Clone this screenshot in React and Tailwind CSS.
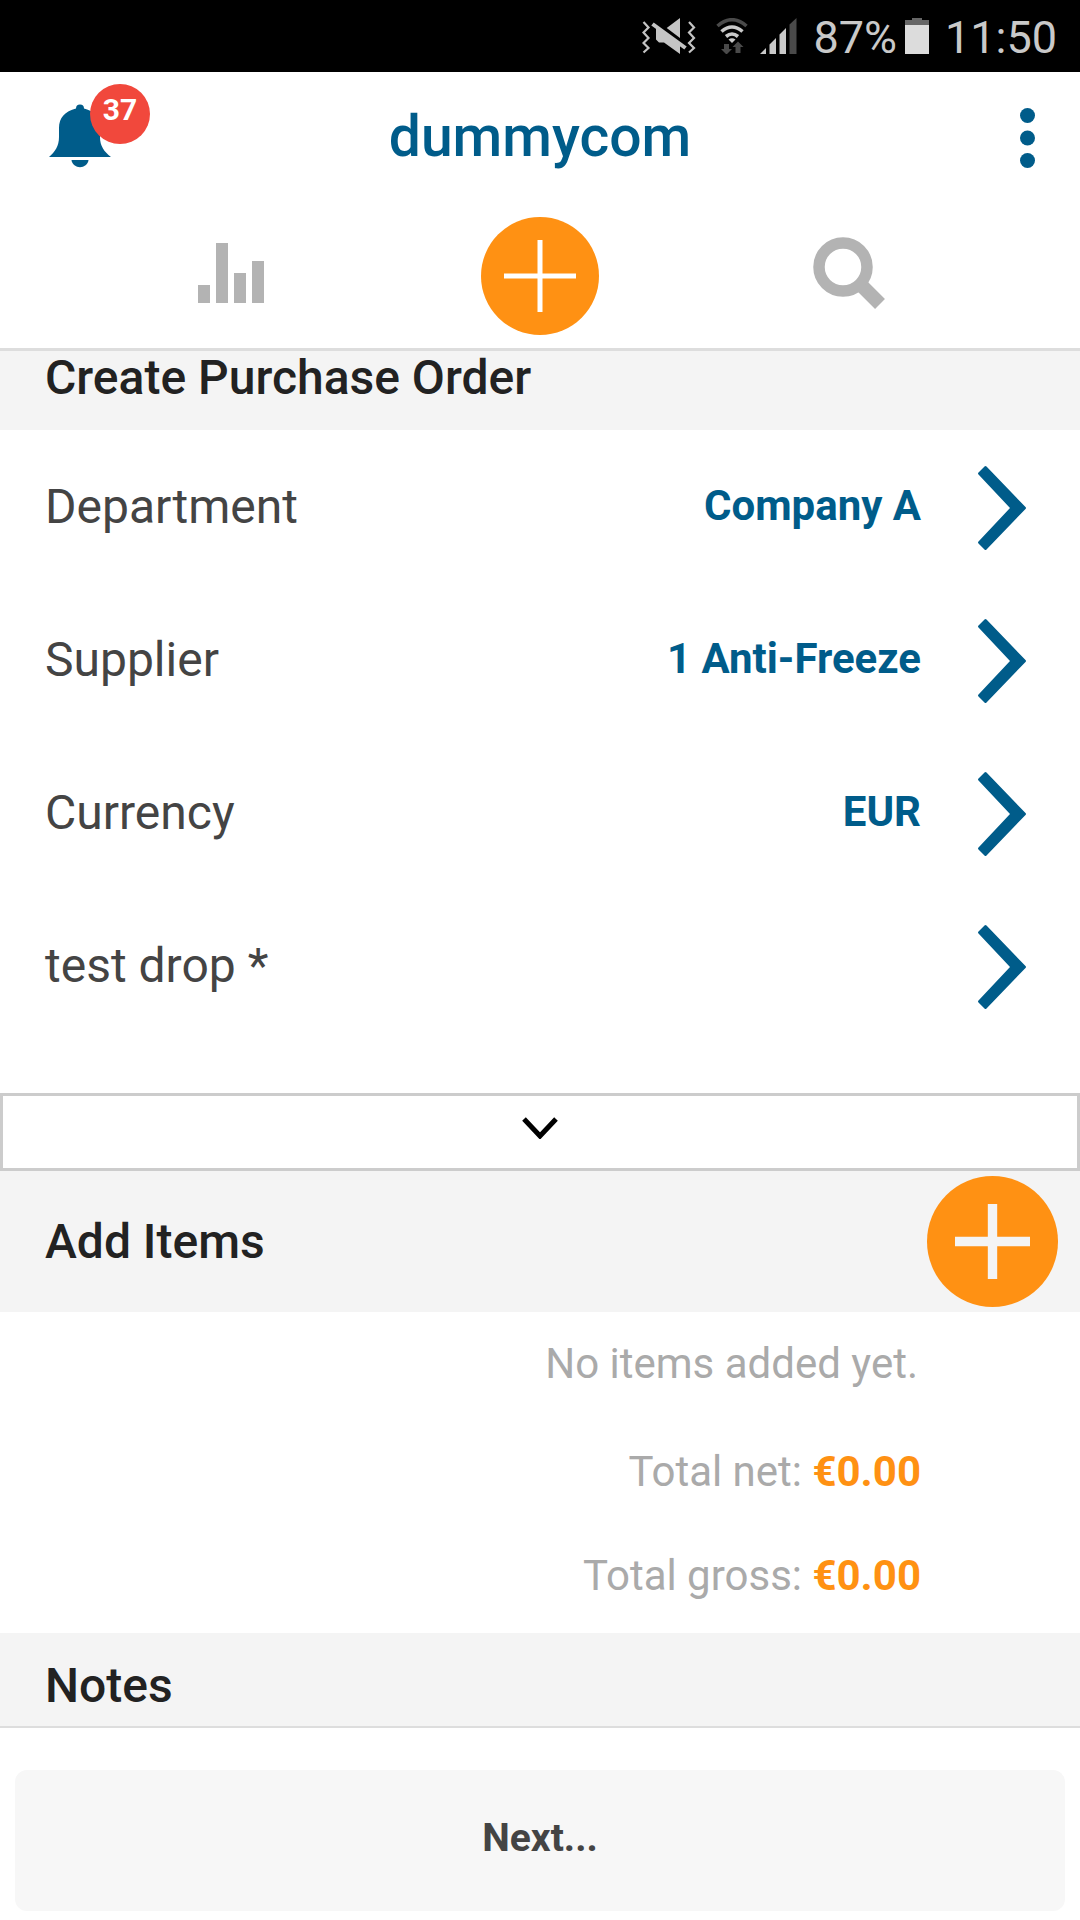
const fields = [
  { label: "Department", value: "Company A" },
  { label: "Supplier", value: "1 Anti-Freeze" },
  { label: "Currency", value: "EUR" },
  { label: "test drop *", value: "" },
];

function MuteIcon() {
  return (
    <svg width="54" height="36" viewBox="0 0 54 36" fill="none" aria-hidden="true">
      <path d="M1.500 4l5 5.500-5 5 5 5.500-5 5 5 5-5 4.500" stroke="#c4c4c4" strokeWidth="2.200" />
      <path d="M47 4l5 5.500-5 5 5 5.500-5 5 5 5-5 4.500" stroke="#c4c4c4" strokeWidth="2.200" />
      <path d="M24.700 10L38 0v20zM14 9l24 17v10L22 24.500h-5l-3-3z" fill="#c4c4c4" />
      <path d="M10.500 6L43.500 30" stroke="#c4c4c4" strokeWidth="4" />
    </svg>
  );
}

function WifiIcon() {
  return (
    <svg width="32" height="36" viewBox="0 0 32 36" fill="none" aria-hidden="true">
      <path d="M1.500 8q14.500-12.500 29 0" stroke="#4a4a4a" strokeWidth="3.600" />
      <path d="M5.500 13.500q10.500-9 21 0M10 18.500q6-5 12 0" stroke="#c9c9c9" strokeWidth="3.600" />
      <path d="M12.500 21.500q3.500-2.500 7 0L16 25z" fill="#c9c9c9" />
      <path d="M8 26h5v5h3l-5.500 5.500L5 31h3zM19.500 35v-6h-3l5.500-5.500 5.500 5.500h-3v6z" fill="#4a4a4a" />
    </svg>
  );
}

function SignalIcon() {
  return (
    <svg width="37" height="36" viewBox="0 0 37 36" aria-hidden="true">
      <path d="M0 36l6-6v6zM9.500 26.500l6.500-6.500v16H9.500zM19.500 16.500L26 10v26h-6.500z" fill="#c9c9c9" />
      <path d="M29.500 6.500L36.500 0v36h-7z" fill="#4a4a4a" />
    </svg>
  );
}

function BatteryIcon() {
  return (
    <svg width="24" height="36" viewBox="0 0 24 36" aria-hidden="true">
      <path d="M0 2h7V0h10v2h7v6H0z" fill="#666" />
      <path d="M0 7h24v29H0z" fill="#dcdcdc" />
    </svg>
  );
}

function BellIcon() {
  return (
    <svg width="62" height="64" viewBox="0 0 62 64" fill="#005c8a" aria-hidden="true">
      <path d="M27 4.500a4 4 0 0 1 8 0C46 7 51 14 51 24v9c0 9 4 14.500 11 20H0c6-5 10-11 10-20v-9C10 14 16 7 27 4.500z" />
      <path d="M22.500 56h17c-1 9.500-16 9.500-17 0z" />
    </svg>
  );
}

function PlusIcon({ className, bar }) {
  return (
    <svg className={className} viewBox="0 0 72 72" fill="none" aria-hidden="true">
      <path d="M36 0v72M0 36h72" stroke="currentColor" strokeWidth={bar} />
    </svg>
  );
}

function ChevronRight() {
  return (
    <svg width="48" height="86" viewBox="0 -2 48 86" fill="#005c8a" aria-hidden="true">
      <path d="M6.500.5q1-1 2 0L47.500 41q1 1 0 2L8.500 83.500q-1 1-2 0l-6-6q-1-1 0-2L32 42 .5 8.500q-1-1 0-2z" />
    </svg>
  );
}

export default function App() {
  return (
    <div className="flex min-h-screen flex-col bg-white font-['Roboto',sans-serif] text-[#222]">
      <div className="flex h-18 items-center justify-end bg-black pr-[23px] text-[45px] leading-none text-[#c9c9c9]">
        <MuteIcon />
        <span className="ml-5 flex"><WifiIcon /></span>
        <span className="ml-3 flex"><SignalIcon /></span>
        <span className="ml-4 pt-0.5">87%</span>
        <span className="ml-2 flex"><BatteryIcon /></span>
        <span className="ml-4 pt-0.5">11:50</span>
      </div>

      <header className="border-b-3 border-[#ddd]">
        <div className="grid h-33 grid-cols-[1fr_auto_1fr] items-center px-[45px] pb-1">
          <button type="button" aria-label="Notifications" className="relative justify-self-start pl-1">
            <BellIcon />
            <span className="absolute -top-5 left-[45px] size-15 rounded-full bg-[#f1483c] text-center text-[30px] leading-[52px] font-bold text-white">
              37
            </span>
          </button>
          <h1 className="text-[57px] leading-none font-medium text-[#005c8a]">dummycom</h1>
          <button type="button" aria-label="More options" className="justify-self-end pt-1">
            <svg width="15" height="60" viewBox="0 0 15 60" fill="#005c8a" aria-hidden="true">
              <circle cx="7.500" cy="7.500" r="7.500" />
              <circle cx="7.500" cy="30" r="7.500" />
              <circle cx="7.500" cy="52.500" r="7.500" />
            </svg>
          </button>
        </div>
        <nav className="grid h-36 grid-cols-3 items-center justify-items-center px-[77px]">
          <button type="button" aria-label="Statistics">
            <svg width="66" height="66" viewBox="0 3 66 66" fill="#b3b3b3" aria-hidden="true">
              <path d="M0 45h12v18H0zM18 3h12v60H18zM36 33h12v30H36zM54 21h12v42H54z" />
            </svg>
          </button>
          <button type="button" aria-label="Create" className="flex size-[118px] items-center justify-center rounded-full bg-[#ff9113] text-white">
            <PlusIcon className="size-18" bar="5" />
          </button>
          <button type="button" aria-label="Search">
            <svg width="72" height="78" viewBox="0 3 72 78" fill="none" stroke="#b3b3b3" aria-hidden="true">
              <circle cx="30" cy="33" r="24" strokeWidth="11.500" />
              <path d="M50 53l17 17" strokeWidth="14" />
            </svg>
          </button>
        </nav>
      </header>

      <main className="flex-1">
        <h2 className="bg-[#f4f4f4] px-[45px] pb-[26px] text-[48px] leading-[53px] font-medium">Create Purchase Order</h2>
        <div className="pb-[51px]">
          {fields.map((field) => (
            <button key={field.label} type="button" className="flex h-[153px] w-full items-center pr-[54px] pl-[45px]">
              <span className="text-[48px] leading-none text-[#444]">{field.label}</span>
              <span className="mr-[57px] ml-auto pb-0.5 text-[42px] leading-none font-bold text-[#005c8a]">{field.value}</span>
              <ChevronRight />
            </button>
          ))}
        </div>
        <button type="button" aria-label="Show more fields" className="flex h-[78px] w-full justify-center border-3 border-[#ccc] pt-[21px]">
          <svg width="36" height="22" viewBox="0 0 36 22" fill="none" aria-hidden="true">
            <path d="M2 2l16 17L34 2" stroke="#000" strokeWidth="5" />
          </svg>
        </button>
        <div className="flex h-[141px] items-center justify-between bg-[#f4f4f4] pr-[22px] pl-[45px]">
          <h2 className="text-[48px] leading-none font-medium">Add Items</h2>
          <button type="button" aria-label="Add item" className="flex size-[131px] items-center justify-center rounded-full bg-[#ff9113] text-[#f4f4f4]">
            <PlusIcon className="size-[75px]" bar="9" />
          </button>
        </div>
        <div className="pt-[10px] pr-[159px] pb-[5px] text-right text-[42px] text-[#aaa]">
          <p className="pr-[3px] leading-[84px]">No items added yet.</p>
          <p className="pt-[14px] leading-[104px]">Total net: <b className="text-[#ff9113]">€0.00</b></p>
          <p className="leading-[104px]">Total gross: <b className="text-[#ff9113]">€0.00</b></p>
        </div>
        <h2 className="bg-[#f4f4f4] px-[45px] pt-[25px] pb-3 text-[48px] leading-[56px] font-medium">Notes</h2>
      </main>

      <footer className="border-t-2 border-[#ddd] px-[15px] pt-[42px] pb-[9px]">
        <button type="button" className="h-[141px] w-full rounded-xl bg-[#f7f7f7] pb-1 text-[39px] leading-none font-bold text-[#444]">
          Next...
        </button>
      </footer>
    </div>
  );
}
